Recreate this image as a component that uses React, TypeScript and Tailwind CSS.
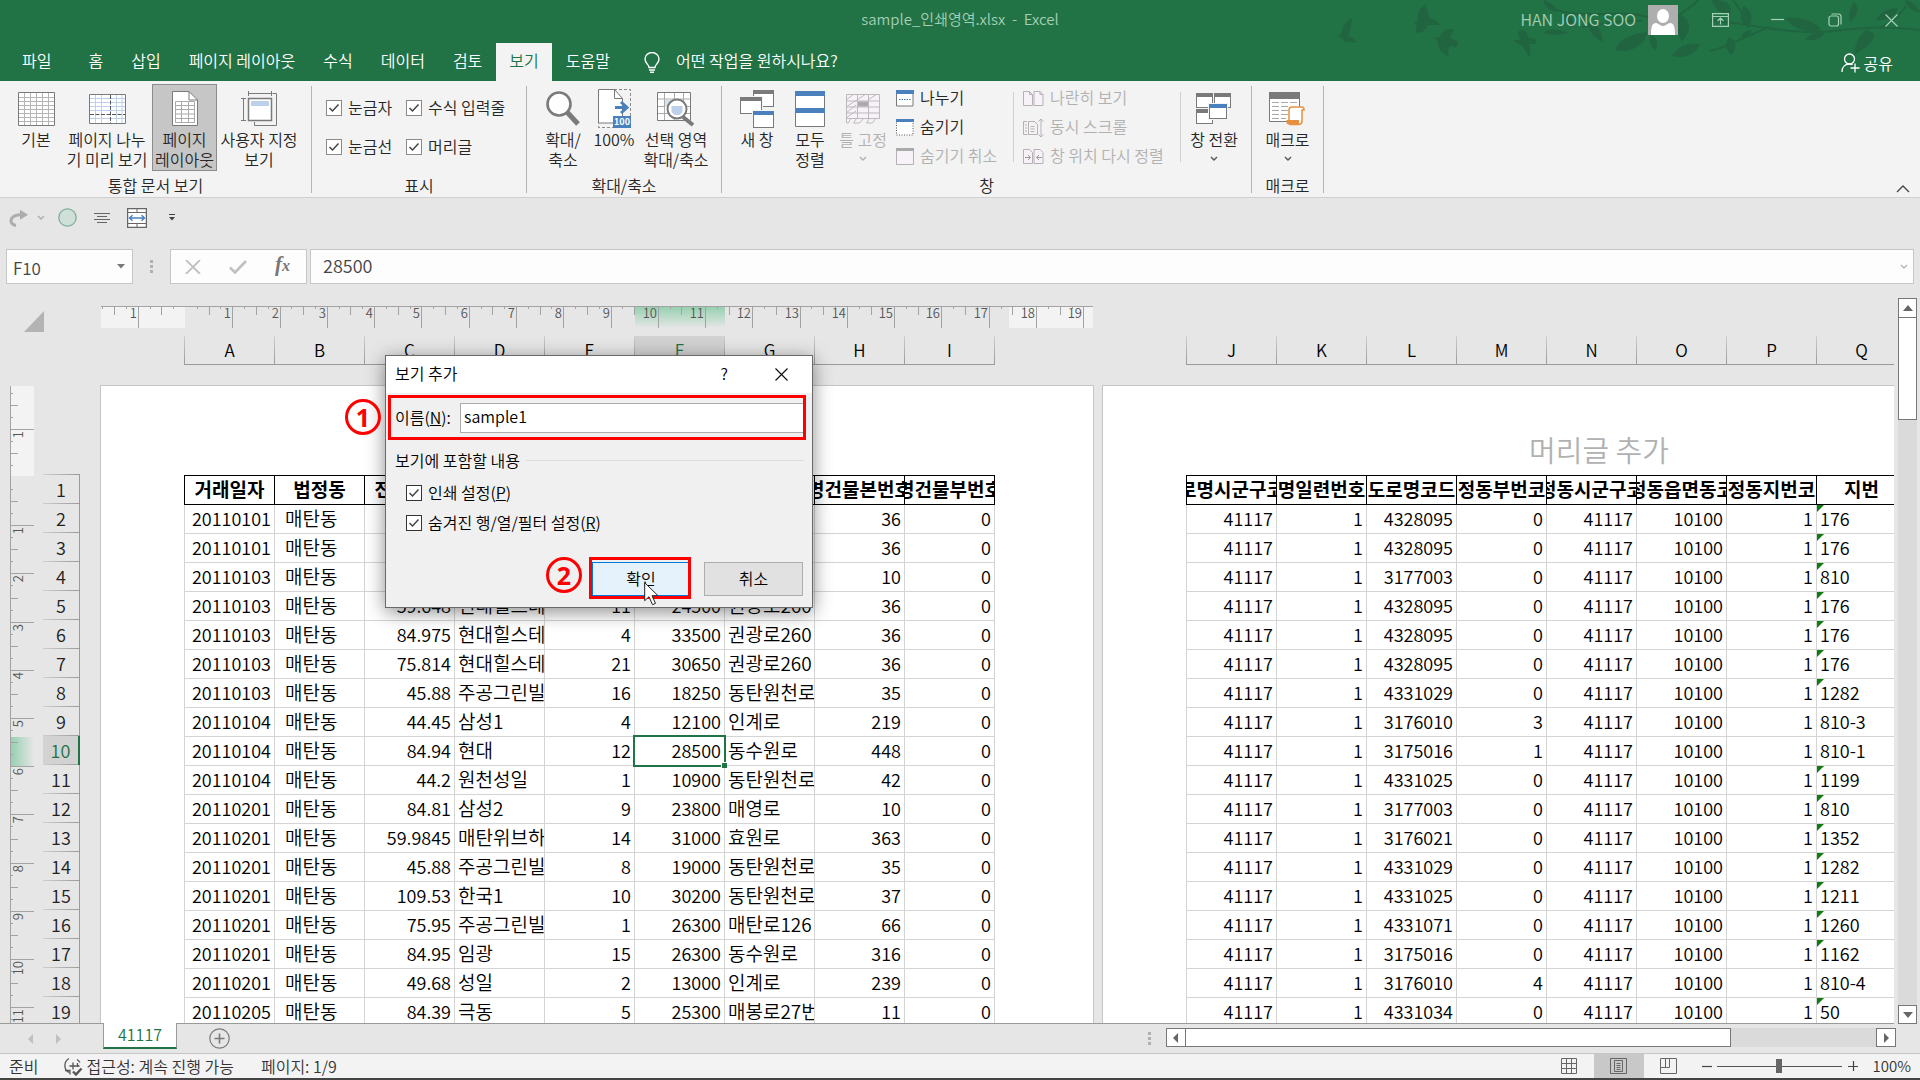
import { useState } from "react";
import type { ReactNode } from "react";

type Row = {
  left: string[];
  right: string[];
};

const leftColumns = ["A", "B", "C", "D", "E", "F", "G", "H", "I"];
const rightColumns = ["J", "K", "L", "M", "N", "O", "P", "Q", "R"];

const leftHeaders = ["거래일자", "법정동", "전용면적", "", "", "", "", "도로명건물본번호코드", "도로명건물부번호코드"];
const rightHeaders = [
  "도로명시군구코드",
  "도로명일련번호코드",
  "도로명코드",
  "법정동부번코드",
  "법정동시군구코드",
  "법정동읍면동코드",
  "법정동지번코드",
  "지번",
  "",
];

const makeRow = (left: string[], road: string, sub: string, lot: string): Row => ({
  left: [left[0], "매탄동", ...left.slice(1), "0"],
  right: ["41117", "1", road, sub, "41117", "10100", "1", lot, ""],
});

const rows: Row[] = [
  makeRow(["20110101", "", "", "", "", "", "36"], "4328095", "0", "176"),
  makeRow(["20110101", "", "", "", "", "", "36"], "4328095", "0", "176"),
  makeRow(["20110103", "", "", "", "", "", "10"], "3177003", "0", "810"),
  makeRow(["20110103", "59.648", "현대힐스테이트", "11", "24500", "권광로260", "36"], "4328095", "0", "176"),
  makeRow(["20110103", "84.975", "현대힐스테이트", "4", "33500", "권광로260", "36"], "4328095", "0", "176"),
  makeRow(["20110103", "75.814", "현대힐스테이트", "21", "30650", "권광로260", "36"], "4328095", "0", "176"),
  makeRow(["20110103", "45.88", "주공그린빌", "16", "18250", "동탄원천로", "35"], "4331029", "0", "1282"),
  makeRow(["20110104", "44.45", "삼성1", "4", "12100", "인계로", "219"], "3176010", "3", "810-3"),
  makeRow(["20110104", "84.94", "현대", "12", "28500", "동수원로", "448"], "3175016", "1", "810-1"),
  makeRow(["20110104", "44.2", "원천성일", "1", "10900", "동탄원천로", "42"], "4331025", "0", "1199"),
  makeRow(["20110201", "84.81", "삼성2", "9", "23800", "매영로", "10"], "3177003", "0", "810"),
  makeRow(["20110201", "59.9845", "매탄위브하늘채", "14", "31000", "효원로", "363"], "3176021", "0", "1352"),
  makeRow(["20110201", "45.88", "주공그린빌", "8", "19000", "동탄원천로", "35"], "4331029", "0", "1282"),
  makeRow(["20110201", "109.53", "한국1", "10", "30200", "동탄원천로", "37"], "4331025", "0", "1211"),
  makeRow(["20110201", "75.95", "주공그린빌", "1", "26300", "매탄로126", "66"], "4331071", "0", "1260"),
  makeRow(["20110201", "84.95", "임광", "15", "26300", "동수원로", "316"], "3175016", "0", "1162"),
  makeRow(["20110201", "49.68", "성일", "2", "13000", "인계로", "239"], "3176010", "4", "810-4"),
  makeRow(["20110205", "84.39", "극동", "5", "25300", "매봉로27번길", "11"], "4331034", "0", "50"),
];

const tabs = ["파일", "홈", "삽입", "페이지 레이아웃", "수식", "데이터", "검토", "보기", "도움말"];

function Chevron({ className = "text-[#555]" }: { className?: string }) {
  return (
    <svg width="8" height="6" viewBox="0 0 8 6" className={className} fill="none" stroke="currentColor" strokeWidth="1.4">
      <path d="M1 1l3 3 3-3" />
    </svg>
  );
}

/* Title bar */

function TitleArt() {
  return (
    <svg
      width="600"
      height="81"
      viewBox="0 0 600 81"
      className="pointer-events-none absolute right-0 top-0"
      fill="#216440"
      stroke="none"
    >
      <path d="M32 18c-7 3-10 10-10 15l-5 3 5 2c2 3 4 5 7 4l8 1-4-5-5-2c3-6 3-12 4-18z" />
      <path d="M105 4c-7 6-8 12-7 17l-4 2 3 2c-2 4-2 7 1 8 5-1 9-4 10-8l12 0-3-4-7-3c-2-4-3-9-5-14z" />
      <path d="M135 30c-8-3-13 1-15 7l-6 1 4 4c-1 6 4 12 12 15-4-6-1-9 0-11 4 1 7 1 8-1l-1-5c-4 0-6-2-7-3 1-3 3-5 5-7z" />
      <path d="M200 30c-3 2-2 6 1 9l-8 2 6 3c4 1 7 8 10 13 2-4 2-9 0-13l8 0-2-5c-4-1-6 0-7-2 0-4-3-7-8-7z" />
      <g fill="none" stroke="#216440" strokeWidth="2">
        <path d="M224 0c4 10 26 16 60 14 30-2 48 2 60 10M262 27c20-2 38-8 60-6M378 0c-6 8-14 10-20 16" />
        <path d="M600 30c-40-6-70 0-100 2-30 2-70-8-110-12M450 27c-20 6-40 20-60 24M560 28c14-6 20-14 26-22M425 24c-2-10-6-16-12-24" />
      </g>
      <path d="M224 2c8-1 12 5 13 10-8-1-11-5-13-10zM243 14c8 0 11 5 10 13-8-3-10-8-10-13zM224 33c6-5 17-4 24 0-7 2-18 3-24 0zM268 23c10 0 14 8 15 19-9-4-14-10-15-19zM295 50c6-12 16-16 32-18-1 12-15 22-32 18zM330 34c8 3 8 10 6 17-6-5-7-11-6-17zM358 14c14 4 14 16 4 28-5-9-7-18-4-28z" />
      <path d="M392 0c14-1 22 6 18 14-10 0-16-6-18-14zM424 6c8 4 10 14 4 22-8-5-9-14-4-22zM352 56c8-11 14-13 28-12-4 10-14 15-28 12zM410 37c8 6 6 12 1 18-6-6-7-12-1-18zM422 38c0-6 4-8 10-8-2 5-5 8-10 8zM465 18c16-1 30 3 36 12-14 3-26 0-36-12zM485 40c4-6 12-8 20-8-4 8-12 9-20 8zM546 30c16 4 6 14-12 25 1-10 4-18 12-25zM530 22c-2-8 0-14 4-20 6 7 4 14-4 20zM556 20c4-8 12-12 22-12-2 8-10 13-22 12zM585 0c8 2 12 6 15 12-8 0-13-4-15-12z" />
    </svg>
  );
}

function TitleBar() {
  return (
    <div className="relative flex h-10 items-center justify-end text-[#a6cfb6]">
      <h1 className="absolute inset-x-0 top-[9px] text-center text-[15px] leading-5">
        sample_인쇄영역.xlsx&nbsp; -&nbsp; Excel
      </h1>
      <span className="mr-3 pb-[2px] text-base">HAN JONG SOO</span>
      <svg width="30" height="30" viewBox="0 0 30 30" className="mr-[34px]">
        <rect width="30" height="30" fill="#aeaeae" />
        <ellipse cx="15" cy="11" rx="6" ry="7" fill="#fff" />
        <path d="M3 30c0-8 1-12 5-12 2 0 4 3 7 3s5-3 7-3c4 0 5 4 5 12z" fill="#fff" />
      </svg>
      <button aria-label="리본 메뉴 표시 옵션" className="mr-[42px]">
        <svg width="17" height="14" viewBox="0 0 17 14" fill="none" stroke="currentColor" strokeWidth="1.2">
          <path d="M.6.6h15.800v12.800h-15.800zM.6 3.500h15.800M8.500 11.500v-6M5.500 8l3-3 3 3" />
        </svg>
      </button>
      <button aria-label="최소화" className="mr-[44px]">
        <svg width="13" height="14" viewBox="0 0 13 14" stroke="currentColor" strokeWidth="1.2">
          <path d="M0 6.500h13" />
        </svg>
      </button>
      <button aria-label="이전 크기로 복원" className="mr-[43px]">
        <svg width="14" height="14" viewBox="0 0 14 14" fill="none" stroke="currentColor" strokeWidth="1.2">
          <rect x="1" y="3" width="9.500" height="10" rx="2" />
          <path d="M3.500 1h7a2.500 2.500 0 012.500 2.500v8" />
        </svg>
      </button>
      <button aria-label="닫기" className="mr-[22px]">
        <svg width="13" height="13" viewBox="0 0 13 13" stroke="currentColor" strokeWidth="1.200">
          <path d="M.5.5l12 12M12.500.5l-12 12" />
        </svg>
      </button>
    </div>
  );
}

function TabBar() {
  return (
    <nav className="relative flex h-[41px] items-stretch pt-[3px] text-base leading-5 text-white">
      {tabs.map((tab) => (
        <button
          key={tab}
          className={
            tab === "보기"
              ? "bg-[#f3f3f3] px-[13px] pb-1 text-[#217346]"
              : tab === "파일"
                ? "pr-[23px] pb-1 pl-[22px]"
                : "px-[14px] pb-1"
          }
        >
          {tab}
        </button>
      ))}
      <button className="ml-5 flex items-center gap-4 pb-1">
        <svg width="16" height="21" viewBox="0 0 16 21" fill="none" stroke="#fff" strokeWidth="1.4" className="mt-1">
          <path d="M5 15.500c0-3-4-4-4-8.500a7 6.500 0 0114 0c0 4.500-4 5.500-4 8.500zM5 18h6M6 20.300h4" />
        </svg>
        어떤 작업을 원하시나요?
      </button>
      <button className="ml-auto mr-[27px] flex items-center gap-1 pt-[2px]">
        <svg width="19" height="20" viewBox="0 0 19 20" fill="none" stroke="#fff" strokeWidth="1.300">
          <circle cx="8.500" cy="6" r="5" />
          <path d="M1 19c0-5 3-8 7.500-8 1.500 0 2.500.3 3 .8M14 10.500v9M9.500 15h9" />
        </svg>
        <span>공유</span>
      </button>
    </nav>
  );
}

/* Ribbon icons */

const NormalIcon = () => (
  <svg width="37" height="34" viewBox="0 0 37 34">
    <path d="M.5.5h36v33h-36z" fill="#fff" />
    <path d="M6.500 1v32M12.500 1v32M18.500 1v32M24.500 1v32M30.500 1v32M1 5.500h35M1 9.500h35M1 13.500h35M1 17.500h35M1 21.500h35M1 25.500h35M1 29.500h35" stroke="#b5b5b5" />
    <path d="M.5.5h36v33h-36z" fill="none" stroke="#7a7a7a" />
  </svg>
);

const PageBreakIcon = () => (
  <svg width="37" height="30" viewBox="0 0 37 30">
    <path d="M.5.5h36v29h-36z" fill="#fff" />
    <path d="M6.500 1v28M12.500 1v28M27.500 1v28M33 1v28M1 4.500h35M1 8.500h35M1 12.500h35M1 16.500h35M1 24.500h35" stroke="#bcd0ea" />
    <path d="M21.500 1v28M1 20.500h35" stroke="#555" strokeDasharray="4 1.500" fill="none" />
    <path d="M.5.5h36v29h-36z" fill="none" stroke="#7a7a7a" />
  </svg>
);

const PageLayoutIcon = () => (
  <svg width="26" height="35" viewBox="0 0 26 35" fill="#fff" stroke="#7a7a7a">
    <path d="M.5.500h16.500l8.500 8.500v25.500h-25z" />
    <path d="M17 .5v8.500h8.500" fill="none" />
    <path d="M3.500 10.500h19v21h-19zM3.500 14.500h19M3.500 18.500h19M3.500 23h19M3.500 27.500h19M9.500 10.500v21M16.500 10.500v21" stroke="#aaa" />
  </svg>
);

const CustomViewIcon = () => (
  <svg width="37" height="36" viewBox="0 0 37 36" fill="none" stroke="#7a7a7a">
    <path d="M31.500 2.500h4v32h-22v-3.500" />
    <path d="M7.500 7.500h23v22h-23z" fill="#fff" strokeWidth="1.500" />
    <path d="M10 10h18v5h-18z" fill="#bcd0ea" stroke="none" />
    <path d="M7.500 0v5M30.500 0v5M7.500 2.500h23M0 7.500h5M0 29.500h5M2.500 7.500v22" />
  </svg>
);

const MagnifierIcon = () => (
  <svg width="34" height="35" viewBox="0 0 34 35">
    <path d="M21 21l11 12" stroke="#7a7a7a" strokeWidth="5" />
    <circle cx="13" cy="13" r="11.500" fill="#fff" stroke="#7a7a7a" strokeWidth="2.600" />
  </svg>
);

const Zoom100Icon = () => (
  <svg width="33" height="40" viewBox="0 0 33 40">
    <path d="M16 .5h16.500v38h-32v-4" fill="none" stroke="#8a8a8a" strokeDasharray="3 2" />
    <path d="M.5.5h16l8 9v24.500h-24z" fill="#fff" stroke="#7a7a7a" />
    <path d="M16.500.5v9h8" fill="none" stroke="#7a7a7a" />
    <path d="M17 18.500h11M23 13l6 5.500-6 5.500" fill="none" stroke="#4a81bd" strokeWidth="3" />
    <path d="M15 27h18v12h-18z" fill="#4a81bd" />
    <text x="24" y="36" fontSize="9" fontWeight="700" textAnchor="middle" fill="#fff">
      100
    </text>
  </svg>
);

const ZoomSelectionIcon = () => (
  <svg width="38" height="36" viewBox="0 0 38 36">
    <path d="M.5 1.500h33v28h-33z" fill="#fff" stroke="#7a7a7a" />
    <path d="M7.500 2v27M17.500 2v27M26.500 2v27M1 8h32M1 15.500h32M1 22.500h32" stroke="#aaa" />
    <path d="M8 9h10v7h-10z" fill="#d5e1f1" />
    <path d="M26 26l10 8" stroke="#7a7a7a" strokeWidth="4" />
    <circle cx="20" cy="18" r="9.500" fill="#fff" stroke="#7a7a7a" strokeWidth="2" />
    <path d="M14.500 15h11v6l-3 3h-5l-3-3z" fill="#bcd0ea" />
  </svg>
);

function WindowShape({ x, y, w, h, accent }: { x: number; y: number; w: number; h: number; accent: string }) {
  return (
    <g>
      <rect x={x - 1} y={y - 1} width={w + 2} height={h + 2} fill="#f3f3f3" />
      <rect x={x + 0.5} y={y + 0.5} width={w - 1} height={h - 1} fill="#fff" stroke="#7a7a7a" />
      <rect x={x} y={y} width={w} height="4" fill={accent} />
    </g>
  );
}

const NewWindowIcon = () => (
  <svg width="35" height="38" viewBox="0 0 35 38">
    <WindowShape x={13} y={0} w={21} h={17} accent="#7a7a7a" />
    <WindowShape x={0} y={7} w={22} h={17} accent="#7a7a7a" />
    <WindowShape x={13} y={21} w={21} h={17} accent="#4a81bd" />
  </svg>
);

const ArrangeIcon = () => (
  <svg width="30" height="36" viewBox="0 0 30 36">
    <path d="M.5.5h29v35h-29z" fill="#fff" stroke="#7a7a7a" />
    <path d="M0 0h30v5h-30zM0 17h30v5h-30z" fill="#4a81bd" />
  </svg>
);

const FreezeIcon = () => (
  <svg width="35" height="30" viewBox="0 0 35 30" fill="#f7f2f7" stroke="#bdb9bd">
    <path d="M.5.500h33v24l-4 0-3 4.500h-6l3-4.500h-6l-4 4.500h-6l3-4.500h-6l-2 4.500h-2z" />
    <path d="M11.500.5v24M22.500.5v24M.5 7h33M.5 13h33M.5 19h33M.500 24.500h33M0 6l8-6M0 13l20-13M0 19l10-8M22 6l9-6M0 24l10-7" fill="none" />
    <path d="M12 7.500h10v5h-10z" fill="#aaa" stroke="none" />
  </svg>
);

const SwitchWindowIcon = () => (
  <svg width="36" height="31" viewBox="0 0 36 31">
    <WindowShape x={0} y={0} w={17} h={15} accent="#7a7a7a" />
    <WindowShape x={18} y={0} w={17} h={15} accent="#7a7a7a" />
    <WindowShape x={0} y={16} w={17} h={15} accent="#7a7a7a" />
    <WindowShape x={13} y={11} w={18} h={15} accent="#4a81bd" />
  </svg>
);

const MacroIcon = () => (
  <svg width="37" height="34" viewBox="0 0 37 34">
    <path d="M.5.500h30v29h-30z" fill="#fff" stroke="#7a7a7a" />
    <path d="M0 0h31v7h-31z" fill="#7a7a7a" />
    <path d="M3 10.500h7M12 10.500h7M21 10.500h7M3 14.500h7M12 14.500h7M3 18.500h7M12 18.500h7M3 22.500h7M12 22.500h7M3 26.500h7M12 26.500h5" stroke="#aaa" />
    <path d="M20 30v-12q0-3 3-3h10q2 0 2 3h-2v11q0 3-3 3.500h-9z" fill="#fff" stroke="#e8903f" strokeWidth="1.500" />
    <path d="M17.500 28h12.500v4.500h-10.500q-2.500-.5-2-4.500z" fill="#e8903f" />
  </svg>
);

const SplitIcon = () => (
  <svg width="18" height="17" viewBox="0 0 18 17">
    <path d="M.5.5h16.500v15.500h-16.500z" fill="#fff" stroke="#7a7a7a" />
    <path d="M0 0h18v4h-18z" fill="#4a81bd" />
    <path d="M3 9.500h12" stroke="#4a81bd" strokeDasharray="1.500 1" />
  </svg>
);

const HideIcon = () => (
  <svg width="18" height="17" viewBox="0 0 18 17">
    <path d="M.5.5h16.500v15.500h-16.500z" fill="#fff" stroke="#555" strokeDasharray="1 1.500" />
    <path d="M0 0h18v3h-18z" fill="#4a81bd" />
  </svg>
);

const UnhideIcon = () => (
  <svg width="18" height="17" viewBox="0 0 18 17">
    <path d="M.5.5h17v16h-17z" fill="#f7f2f7" stroke="#b5b1b5" />
    <path d="M0 0h18v3h-18z" fill="#aaa" />
  </svg>
);

const SideBySideIcon = () => (
  <svg width="21" height="15" viewBox="0 0 21 15" fill="#f7f2f7" stroke="#b5b1b5">
    <path d="M.5.500h6l3 3v11h-9zM11 .500h6l3 3v11h-9zM6.500.500v3h3M17 .5v3h3" />
  </svg>
);

const SyncScrollIcon = () => (
  <svg width="21" height="20" viewBox="0 0 21 20" fill="none" stroke="#b5b1b5">
    <path d="M4 3.500h-3.500v13h4M5.500 3.500h6l3 3v10h-9zM7.500 8.500h4M7.500 11h4M7.500 13.500h4M2 7h2M2 10h2M2 13h2M18 1v18M15.500 3.500l2.500-2.500 2.500 2.500M15.500 16.500l2.500 2.500 2.500-2.500" />
  </svg>
);

const ResetPositionIcon = () => (
  <svg width="21" height="15" viewBox="0 0 21 15" fill="#f7f2f7" stroke="#b5b1b5">
    <path d="M.5.500h6l3 3v11h-9zM11 .500h6l3 3v11h-9z" />
    <path d="M2 8.500h5M5 6l2.500 2.500-2.500 2.500M19 8.500h-5M16 6l-2.500 2.500 2.500 2.500" fill="none" stroke="#999" />
  </svg>
);

/* Ribbon */

function RibbonButton({
  icon,
  lines,
  className,
  menu = false,
  disabled = false,
}: {
  icon: ReactNode;
  lines: string[];
  className: string;
  menu?: boolean;
  disabled?: boolean;
}) {
  return (
    <button
      className={`flex h-[87px] flex-col items-center whitespace-nowrap leading-5 ${disabled ? "text-[#b1b1b1]" : ""} ${className}`}
    >
      <span className="mt-1 grid h-[41px] place-items-center">{icon}</span>
      {lines.map((line) => (
        <span key={line}>{line}</span>
      ))}
      {menu && (
        <span className="mt-[7px]">
          <Chevron className={disabled ? "text-[#b1b1b1]" : "text-[#555]"} />
        </span>
      )}
    </button>
  );
}

function SmallButton({ icon, label, disabled = false }: { icon: ReactNode; label: string; disabled?: boolean }) {
  return (
    <button className={`flex h-[29px] items-center gap-[6px] whitespace-nowrap leading-5 ${disabled ? "text-[#b1b1b1]" : ""}`}>
      {icon}
      <span className="pb-[3px]">{label}</span>
    </button>
  );
}

function RibbonGroup({ label, className, children }: { label: string; className: string; children: ReactNode }) {
  return (
    <section className={`mb-1 flex h-[107px] shrink-0 flex-col justify-between border-r border-[#b5b5b5] ${className}`}>
      <div className="-mt-[2px] flex">{children}</div>
      <h2 className="text-center leading-4">{label}</h2>
    </section>
  );
}

function CheckBox({ children, className = "", border = "border-[#8a8a8a]" }: { children: ReactNode; className?: string; border?: string }) {
  return (
    <label className={`flex items-center gap-[6px] whitespace-nowrap leading-5 ${className}`}>
      <span className="grid">
        <input
          type="checkbox"
          defaultChecked
          className={`peer col-start-1 row-start-1 size-4 appearance-none border bg-white ${border}`}
        />
        <svg
          viewBox="0 0 16 16"
          className="pointer-events-none invisible col-start-1 row-start-1 size-4 peer-checked:visible"
          fill="none"
          stroke="#444"
          strokeWidth="1.500"
        >
          <path d="M3.500 8l3 3 6-6.500" />
        </svg>
      </span>
      <span className="pb-[2px]">{children}</span>
    </label>
  );
}

function Ribbon() {
  return (
    <div className="relative flex h-[117px] border-b border-[#d0d0d0] bg-[#f3f3f3] pt-[5px] text-base text-[#262626]">
      <RibbonGroup label="통합 문서 보기" className="w-[312px]">
        <RibbonButton icon={<NormalIcon />} lines={["기본"]} className="ml-[6px] w-[60px]" />
        <RibbonButton icon={<PageBreakIcon />} lines={["페이지 나누", "기 미리 보기"]} className="w-[82px]" />
        <RibbonButton
          icon={<PageLayoutIcon />}
          lines={["페이지", "레이아웃"]}
          className="ml-1 w-[65px] bg-[#c6c6c6] outline outline-1 -outline-offset-1 outline-[#8c8c8c]"
        />
        <RibbonButton icon={<CustomViewIcon />} lines={["사용자 지정", "보기"]} className="w-[84px]" />
      </RibbonGroup>

      <RibbonGroup label="표시" className="w-[215px]">
        <div className="ml-[14px] grid grid-cols-[80px_auto] pt-1">
          <CheckBox className="h-[39px]">눈금자</CheckBox>
          <CheckBox className="h-[39px]">수식 입력줄</CheckBox>
          <CheckBox className="h-[39px]">눈금선</CheckBox>
          <CheckBox className="h-[39px]">머리글</CheckBox>
        </div>
      </RibbonGroup>

      <RibbonGroup label="확대/축소" className="w-[195px]">
        <RibbonButton icon={<MagnifierIcon />} lines={["확대/", "축소"]} className="ml-[10px] w-[52px]" />
        <RibbonButton icon={<Zoom100Icon />} lines={["100%"]} className="w-[50px]" />
        <RibbonButton icon={<ZoomSelectionIcon />} lines={["선택 영역", "확대/축소"]} className="w-[74px]" />
      </RibbonGroup>

      <RibbonGroup label="창" className="w-[530px]">
        <RibbonButton icon={<NewWindowIcon />} lines={["새 창"]} className="ml-[6px] w-[58px]" />
        <RibbonButton icon={<ArrangeIcon />} lines={["모두", "정렬"]} className="w-[48px]" />
        <RibbonButton icon={<FreezeIcon />} lines={["틀 고정"]} menu disabled className="w-[58px]" />
        <div className="ml-1 w-[117px]">
          <SmallButton icon={<SplitIcon />} label="나누기" />
          <SmallButton icon={<HideIcon />} label="숨기기" />
          <SmallButton icon={<UnhideIcon />} label="숨기기 취소" disabled />
        </div>
        <div className="mt-2 h-[70px] w-px bg-[#d0d0d0]" />
        <div className="ml-[9px] w-[157px]">
          <SmallButton icon={<SideBySideIcon />} label="나란히 보기" disabled />
          <SmallButton icon={<SyncScrollIcon />} label="동시 스크롤" disabled />
          <SmallButton icon={<ResetPositionIcon />} label="창 위치 다시 정렬" disabled />
        </div>
        <div className="mt-2 h-[70px] w-px bg-[#d0d0d0]" />
        <RibbonButton icon={<SwitchWindowIcon />} lines={["창 전환"]} menu className="w-[66px]" />
      </RibbonGroup>

      <RibbonGroup label="매크로" className="w-[72px]">
        <RibbonButton icon={<MacroIcon />} lines={["매크로"]} menu className="w-full" />
      </RibbonGroup>

      <button aria-label="리본 메뉴 축소" className="ml-auto mr-[10px] mb-[4px] self-end">
        <svg width="14" height="8" viewBox="0 0 14 8" fill="none" stroke="#444" strokeWidth="1.300">
          <path d="M1 7l6-6 6 6" />
        </svg>
      </button>
    </div>
  );
}

function QuickAccess() {
  return (
    <div className="flex h-[39px] shrink-0 items-center pl-[9px]">
      <button aria-label="다시 실행" className="flex items-center gap-[8px]">
        <svg width="20" height="18" viewBox="0 0 20 18" fill="none" stroke="#adadad" strokeWidth="3">
          <path d="M7 16.500c-5-1-6-5-4-7.500 2-3 7-3.500 12-3.500" />
          <path d="M11 .8l8 5-8 5z" fill="#adadad" stroke="none" />
        </svg>
        <Chevron className="text-[#adadad]" />
      </button>
      <button aria-label="타원" className="ml-[13px]">
        <svg width="19" height="19" viewBox="0 0 19 19">
          <circle cx="9.500" cy="9.500" r="8.700" fill="#cfe0d8" stroke="#7fae98" strokeWidth="1.300" />
        </svg>
      </button>
      <button aria-label="가운데 맞춤" className="ml-[17px]">
        <svg width="16" height="12" viewBox="0 0 16 12" stroke="#666" strokeWidth="1">
          <path d="M0 1.500h16M3 4.500h10M0 7.500h16M3 10.500h10" />
        </svg>
      </button>
      <button aria-label="병합하고 가운데 맞춤" className="ml-[17px]">
        <svg width="20" height="20" viewBox="0 0 20 20">
          <path d="M.6.6h18.800v18.800h-18.800z" fill="#fff" stroke="#666" strokeWidth="1.300" />
          <path d="M0 4.500h20M0 15.500h20M10 0v4.500M10 15.500v4.500" stroke="#666" />
          <path d="M2.500 10h15M5.500 7.200L2.500 10l3 2.800M14.500 7.200l3 2.800-3 2.800" stroke="#4a81bd" strokeWidth="1.500" fill="none" />
        </svg>
      </button>
      <button aria-label="빠른 실행 도구 모음 사용자 지정" className="ml-[22px]">
        <svg width="6" height="7" viewBox="0 0 6 7" fill="#444">
          <path d="M0 0h6v1h-6zM0 3h6l-3 3.500z" />
        </svg>
      </button>
    </div>
  );
}

function Dots() {
  return (
    <svg width="4" height="14" viewBox="0 0 4 14" fill="#b0b0b0">
      <path d="M0 0h3v3h-3zM0 5h3v3h-3zM0 10h3v3h-3z" />
    </svg>
  );
}

function FormulaBar() {
  return (
    <div className="mt-3 flex h-[35px] shrink-0 items-stretch pl-[6px] pr-[6px] text-[17px] text-[#444]">
      <div className="flex w-[127px] items-center border border-[#c6c6c6] bg-[#fdfdfd]">
        <input aria-label="이름 상자" defaultValue="F10" className="w-full min-w-0 flex-1 bg-transparent pl-[6px] pt-[2px] outline-none" />
        <button aria-label="이름 목록" className="mr-[7px]">
          <svg width="8" height="5" viewBox="0 0 8 5" fill="#777">
            <path d="M0 0h8l-4 4.500z" />
          </svg>
        </button>
      </div>
      <div className="flex w-[37px] items-center justify-center">
        <Dots />
      </div>
      <div className="flex w-[137px] items-center border border-[#c6c6c6] bg-[#fdfdfd]">
        <button aria-label="취소" className="ml-[14px]">
          <svg width="16" height="14" viewBox="0 0 16 14" stroke="#c0c0c0" strokeWidth="1.800">
            <path d="M1 0l14 14M15 0L1 14" />
          </svg>
        </button>
        <button aria-label="입력" className="ml-[28px]">
          <svg width="18" height="14" viewBox="0 0 18 14" fill="none" stroke="#c0c0c0" strokeWidth="2.600">
            <path d="M1 7.500l5 5L17 1" />
          </svg>
        </button>
        <button aria-label="함수 삽입" className="ml-[28px] pb-[2px] font-['Liberation_Serif',serif] text-[21px] leading-5 font-bold text-[#777] italic">
          f<span className="text-base">x</span>
        </button>
      </div>
      <div className="ml-[3px] flex flex-1 items-center border border-[#c6c6c6] bg-[#fdfdfd]">
        <input aria-label="수식 입력줄" defaultValue="28500" className="min-w-0 flex-1 bg-transparent pb-[2px] pl-3 text-[18px] outline-none" />
        <span className="mr-[5px]">
          <Chevron className="text-[#b5b5b5]" />
        </span>
      </div>
    </div>
  );
}

/* Rulers */

const HCM = 47.28;
const VCM = 48.2;

function HorizontalRuler() {
  const quarters = Array.from({ length: 84 }, (_, i) => i - 7);
  return (
    <svg width="993" height="22" className="block">
      <defs>
        <linearGradient id="selectedColumn" x1="0" y1="0" x2="0" y2="1">
          <stop offset="0" stopColor="#93cfae" />
          <stop offset="1" stopColor="#e6e6e6" />
        </linearGradient>
      </defs>
      <rect x="1" width="84" height="22" fill="#f3f3f3" />
      <rect x="909" width="84" height="22" fill="#f3f3f3" />
      <rect x="535" width="90" height="22" fill="url(#selectedColumn)" />
      <rect x="1" width="992" height="1" fill="#a3a3a3" />
      {quarters.map((q) => {
        const x = Math.round(85 + (q * HCM) / 4);
        if (q === 0 || x >= 992) return null;
        const whole = q % 4 === 0;
        const height = whole ? 21 : q % 2 === 0 ? 8 : 2;
        return (
          <g key={q}>
            <rect x={x} y="1" width="1" height={height} fill="#a3a3a3" />
            {whole && (
              <text x={x - 1} y="12" fontSize="13" textAnchor="end" fill="#555">
                {Math.abs(q / 4)}
              </text>
            )}
          </g>
        );
      })}
    </svg>
  );
}

function VerticalRuler() {
  const quarters = Array.from({ length: 53 }, (_, i) => i - 7);
  return (
    <svg width="24" height="640" className="block shrink-0">
      <defs>
        <linearGradient id="selectedRow">
          <stop offset="0" stopColor="#93cfae" />
          <stop offset="1" stopColor="#e6e6e6" />
        </linearGradient>
      </defs>
      <rect y="1" width="24" height="90" fill="#f3f3f3" />
      <rect y="352" width="24" height="29" fill="url(#selectedRow)" />
      <rect width="1" y="1" height="640" fill="#a3a3a3" />
      {quarters.map((q) => {
        const y = Math.round(92 + (q * VCM) / 4);
        if (q === 0) return null;
        const whole = q % 4 === 0;
        const width = whole ? 23 : q % 2 === 0 ? 7 : 2;
        return (
          <g key={q}>
            <rect y={y} x="1" height="1" width={width} fill="#a3a3a3" />
            {whole && (
              <text transform={`translate(13 ${y + 2}) rotate(-90)`} fontSize="13" textAnchor="end" fill="#555">
                {Math.abs(q / 4)}
              </text>
            )}
          </g>
        );
      })}
    </svg>
  );
}

/* Sheet */

function ColumnHeads({ columns, selected }: { columns: string[]; selected?: string }) {
  return (
    <div className="ml-[84px] flex h-[29px] w-[811px] border-b border-[#9a9a9a] text-[17px] leading-[27px] text-black">
      <div className="w-px bg-linear-to-b from-[#cfcfcf] to-[#9a9a9a]" />
      {columns.map((column) => (
        <div key={column} className={`flex w-[90px] ${column === selected ? "bg-[#d2d2d2] text-[#217346]" : ""}`}>
          <span className="flex-1 text-center">{column}</span>
          <span className="w-px bg-linear-to-b from-[#cfcfcf] to-[#9a9a9a]" />
        </div>
      ))}
    </div>
  );
}

function Cell({ value, column, selected }: { value: string; column: string; selected: boolean }) {
  const hangul = column === "B" || column === "D" || column === "G";
  const textual = hangul || column === "Q";
  const edge = column === "A" || column === "J" ? "border-l" : "";
  return (
    <td className={`relative h-[29px] border-r border-b border-[#d4d4d4] p-0 ${edge}`}>
      <div
        className={`h-7 overflow-hidden whitespace-nowrap ${hangul ? "text-[19px] leading-[25px]" : "text-[18px] leading-[27px]"} ${
          column === "B" ? "pl-[10px]" : textual ? "pl-[3px]" : "pr-[3px] text-right"
        }`}
      >
        {value}
      </div>
      {column === "Q" && !value.includes("-") && (
        <svg width="7" height="7" className="absolute top-0 left-0">
          <path d="M0 0h7l-7 7z" fill="#107c10" />
        </svg>
      )}
      {selected && (
        <div className="absolute -top-[2px] -right-[2px] -bottom-[2px] -left-[2px] z-10 border-2 border-[#217346]">
          <span className="absolute -right-[3px] -bottom-[3px] size-[6px] border-t border-l border-white bg-[#217346]" />
        </div>
      )}
    </td>
  );
}

function SheetTable({ columns, headers, side }: { columns: string[]; headers: string[]; side: "left" | "right" }) {
  return (
    <table className="ml-[83px] w-[811px] table-fixed border-separate border-spacing-0 text-black">
      <colgroup>
        {columns.map((column, i) => (
          <col key={column} className={i === 0 ? "w-[91px]" : "w-[90px]"} />
        ))}
      </colgroup>
      <thead>
        <tr>
          {headers.map((header, i) => (
            <th key={columns[i]} className={`h-[30px] border-y border-r border-black p-0 ${i === 0 ? "border-l" : ""}`}>
              <div className="flex h-7 justify-center overflow-hidden whitespace-nowrap text-[19px] leading-[25px] font-bold">
                <span className="shrink-0">{header}</span>
              </div>
            </th>
          ))}
        </tr>
      </thead>
      <tbody>
        {rows.map((row, r) => (
          <tr key={r}>
            {row[side].map((value, i) => (
              <Cell key={columns[i]} value={value} column={columns[i]} selected={columns[i] === "F" && r === 8} />
            ))}
          </tr>
        ))}
      </tbody>
    </table>
  );
}

function PageView({
  columns,
  headers,
  side,
  header,
}: {
  columns: string[];
  headers: string[];
  side: "left" | "right";
  header?: string;
}) {
  return (
    <div className="flex w-[994px] shrink-0 flex-col">
      <div className="h-[22px] shrink-0">{side === "left" && <HorizontalRuler />}</div>
      <div className="mt-2 shrink-0">
        <ColumnHeads columns={columns} selected="F" />
      </div>
      <div className="mt-5 flex-1 border border-b-0 border-[#c6c6c6] bg-white">
        <div className="h-[89px] pt-[43px] text-center text-[29px] leading-10 text-[#b1b1b1]">{header}</div>
        <SheetTable columns={columns} headers={headers} side={side} />
      </div>
    </div>
  );
}

function RowHeads() {
  return (
    <div className="mt-[89px] ml-[9px] w-[37px] border-r border-[#9a9a9a] text-center text-[18px] leading-7 text-[#222]">
      <div className="h-px bg-linear-to-r from-[#cfcfcf] to-[#9a9a9a]" />
      {Array.from({ length: 19 }, (_, i) => i + 1).map((n) => (
        <div key={n} className={n === 10 ? "-mr-px border-r-2 border-[#217346] bg-[#d2d2d2] text-[#217346]" : ""}>
          <div className="h-7">{n}</div>
          <div className="h-px bg-linear-to-r from-[#cfcfcf] to-[#9a9a9a]" />
        </div>
      ))}
    </div>
  );
}

function ScrollArrow({ d, className }: { d: string; className: string }) {
  return (
    <button aria-label="스크롤" className={`grid shrink-0 place-items-center border border-[#777] bg-white ${className}`}>
      <svg width="10" height="10" viewBox="0 0 10 10" fill="#666">
        <path d={d} />
      </svg>
    </button>
  );
}

function Workspace() {
  return (
    <div className="flex min-h-0 flex-1">
      <div className="flex min-w-0 flex-1 overflow-hidden border-b border-[#9a9a9a]">
        <div className="flex w-[100px] shrink-0 flex-col">
          <div className="h-[101px] shrink-0 pt-[27px] pl-6">
            <svg width="20" height="21" viewBox="0 0 20 21" fill="#b3b3b3">
              <path d="M20 0v21h-20z" />
            </svg>
          </div>
          <div className="flex pl-[10px]">
            <VerticalRuler />
            <RowHeads />
          </div>
        </div>
        <div className="flex min-w-0 flex-1 gap-2 pt-[22px]">
          <PageView columns={leftColumns} headers={leftHeaders} side="left" />
          <PageView columns={rightColumns} headers={rightHeaders} side="right" header="머리글 추가" />
        </div>
      </div>
      <div className="flex w-[26px] shrink-0 flex-col pt-[14px] pr-[3px] pl-1">
        <ScrollArrow d="M0 8l5-6 5 6z" className="h-5" />
        <div className="flex-1 bg-[#dadada]">
          <div className="-mt-px h-[103px] border border-[#777] bg-white" />
        </div>
        <ScrollArrow d="M0 2l5 6 5-6z" className="h-[19px]" />
      </div>
    </div>
  );
}

function SheetTabs() {
  return (
    <div className="flex h-[29px] shrink-0">
      <div className="flex w-[103px] items-center gap-[21px] pl-7">
        <svg width="5" height="10" fill="#c0c0c0">
          <path d="M5 0v10l-5-5z" />
        </svg>
        <svg width="5" height="10" fill="#c0c0c0" className="ml-[2px]">
          <path d="M0 0v10l5-5z" />
        </svg>
      </div>
      <button className="-mt-px h-[26px] w-[74px] border-x border-b-2 border-x-[#9a9a9a] border-b-[#217346] bg-white pb-[2px] text-base leading-[22px] text-[#217346]">
        41117
      </button>
      <button aria-label="새 시트" className="ml-8">
        <svg width="21" height="21" viewBox="0 0 21 21" fill="none" stroke="#7a7a7a" strokeWidth="1.200">
          <circle cx="10.500" cy="10.500" r="9.700" />
          <path d="M10.500 5.500v10M5.500 10.500h10" strokeWidth="1.600" />
        </svg>
      </button>
      <div className="ml-auto flex w-[772px] pt-1 pr-[24px] pb-[6px]">
        <span className="mt-1 mr-[14px]">
          <Dots />
        </span>
        <ScrollArrow d="M7 0v10l-5-5z" className="w-5" />
        <div className="-ml-px flex-1 bg-[#dadada]">
          <div className="h-full w-[79%] border border-[#777] bg-white" />
        </div>
        <ScrollArrow d="M3 0v10l5-5z" className="w-5" />
      </div>
    </div>
  );
}

function StatusBar() {
  const [zoom, setZoom] = useState(50);
  return (
    <footer className="flex h-[27px] shrink-0 items-stretch border-t border-b-2 border-t-[#c6c6c6] border-b-[#444] bg-[#f3f3f3] text-base leading-6 text-[#333]">
      <span className="ml-[9px]">준비</span>
      <button className="ml-[26px] flex items-center gap-[3px]">
        <svg width="19" height="19" viewBox="0 0 19 19" fill="none" stroke="#555" strokeWidth="1.300">
          <path d="M5 1.500a8 8 0 000 14M13 2.500a8 8 0 013 3M1 13.500h5v4" />
          <path d="M9 5.500v7M5.500 9h10M13.500 6v4" />
          <path d="M9 14.500l3 3 5.500-6" strokeWidth="2.400" />
        </svg>
        접근성: 계속 진행 가능
      </button>
      <span className="ml-[27px]">페이지: 1/9</span>
      <div className="ml-auto flex items-stretch">
        <button aria-label="기본" className="w-[50px] pl-[17px]">
          <svg width="16" height="16" viewBox="0 0 16 16" fill="none" stroke="#666">
            <path d="M.5.5h15v15h-15zM5.500.500v15M10.500.5v15M.5 5.500h15M.5 10.500h15" />
          </svg>
        </button>
        <button aria-label="페이지 레이아웃" className="w-[50px] bg-[#c8c8c8] pl-4">
          <svg width="17" height="16" viewBox="0 0 17 16" fill="none" stroke="#666">
            <path d="M.5.5h16v15h-16zM4.500 2.500h8v11h-8zM6.500 5.500h4M6.500 7.500h4M6.500 9.500h4M6.500 11.500h4" />
          </svg>
        </button>
        <button aria-label="페이지 나누기 미리 보기" className="w-[50px] pl-4">
          <svg width="17" height="16" viewBox="0 0 17 16" fill="none" stroke="#666">
            <path d="M.5.5h16v15h-16zM.5 9.500h9v-9M5.500.500v9" />
          </svg>
        </button>
        <button aria-label="축소" className="ml-2 grid place-items-center">
          <svg width="10" height="10" stroke="#444">
            <path d="M0 5.500h10" strokeWidth="1.200" />
          </svg>
        </button>
        <div className="ml-[5px] grid w-[125px] items-center">
          <div className="col-start-1 row-start-1 h-px bg-[#555]" />
          <input
            type="range"
            aria-label="확대/축소"
            value={zoom}
            onChange={(e) => setZoom(Number(e.target.value))}
            className="col-start-1 row-start-1 h-4 w-full appearance-none bg-transparent [&::-webkit-slider-thumb]:h-[14px] [&::-webkit-slider-thumb]:w-[6px] [&::-webkit-slider-thumb]:appearance-none [&::-webkit-slider-thumb]:bg-[#666]"
          />
        </div>
        <button aria-label="확대" className="ml-[6px] grid place-items-center">
          <svg width="10" height="10" stroke="#444">
            <path d="M0 5.500h10M5.500 0v10" strokeWidth="1.200" />
          </svg>
        </button>
        <span className="mr-[9px] ml-[15px] text-[15px]">100%</span>
      </div>
    </footer>
  );
}

/* Dialog and callouts */

function CircledNumber({ n, className }: { n: number; className: string }) {
  return (
    <span
      className={`absolute grid size-9 place-items-center rounded-full border-[3px] border-[#fe0000] font-['Open_Sans',sans-serif] text-[25px] leading-none font-bold text-[#fe0000] ${className}`}
    >
      {n}
    </span>
  );
}

function AddViewDialog() {
  const [name, setName] = useState("sample1");
  return (
    <div
      role="dialog"
      aria-labelledby="dialog-title"
      className="absolute top-[355px] left-[385px] z-20 w-[428px] border border-[#6a6a6a] bg-[#f0f0f0] text-base leading-5 text-black shadow-[0_4px_18px_rgba(0,0,0,0.45)]"
    >
      <div className="flex h-[37px] items-center bg-white pl-[9px]">
        <h2 id="dialog-title" className="flex-1 pb-1">
          보기 추가
        </h2>
        <button aria-label="도움말" className="mr-[47px] pb-1">
          ?
        </button>
        <button aria-label="닫기" className="mr-6">
          <svg width="13" height="13" viewBox="0 0 13 13" stroke="#111" strokeWidth="1.200">
            <path d="M.5.5l12 12M12.500.5l-12 12" />
          </svg>
        </button>
      </div>
      <div className="flex items-center pt-[10px] pr-2 pl-[9px]">
        <label htmlFor="view-name" className="w-[65px] pb-[2px]">
          이름(<u>N</u>):
        </label>
        <input
          id="view-name"
          value={name}
          onChange={(e) => setName(e.target.value)}
          className="h-[30px] min-w-0 flex-1 border border-[#ababab] bg-white pb-1 pl-[3px] outline-none"
        />
      </div>
      <fieldset className="mt-[17px] pr-2 pl-[9px]">
        <legend className="flex w-full items-center gap-[6px]">
          보기에 포함할 내용
          <span className="h-px flex-1 bg-[#dcdcdc]" />
        </legend>
        <div className="pt-2 pl-[11px]">
          <CheckBox className="h-[30px]" border="border-[#333]">
            인쇄 설정(<u>P</u>)
          </CheckBox>
          <CheckBox className="h-[30px]" border="border-[#333]">
            숨겨진 행/열/필터 설정(<u>R</u>)
          </CheckBox>
        </div>
      </fieldset>
      <div className="mt-6 flex justify-end gap-[14px] pr-[9px] pb-[11px]">
        <button className="h-[34px] w-[98px] border border-[#0078d7] bg-[#e5f1fb] pb-[2px]">확인</button>
        <button className="h-[34px] w-[99px] border border-[#adadad] bg-[#e1e1e1] pb-[2px]">취소</button>
      </div>

      <div className="pointer-events-none absolute top-[39px] left-[2px] h-[45px] w-[418px] border-[3px] border-[#fe0000]" />
      <div className="pointer-events-none absolute top-[201px] left-[203px] h-[42px] w-[102px] border-[3px] border-[#fe0000]" />
      <CircledNumber n={1} className="top-[43px] -left-[41px]" />
      <CircledNumber n={2} className="top-[201px] left-[160px]" />
      <svg width="15" height="24" viewBox="0 0 15 24" className="absolute top-[226px] left-[258px]" fill="#fff" stroke="#222">
        <path d="M.7.7v18l4.300-4 3.500 8 3-1.300-3.500-7.700h6z" />
      </svg>
    </div>
  );
}

export default function App() {
  return (
    <div className="relative flex h-screen flex-col overflow-hidden bg-[#e6e6e6] font-['Noto_Sans_CJK_KR','Open_Sans',sans-serif] font-[350]">
      <header className="relative shrink-0 bg-[#217346]">
        <TitleArt />
        <TitleBar />
        <TabBar />
        <Ribbon />
      </header>
      <QuickAccess />
      <FormulaBar />
      <Workspace />
      <SheetTabs />
      <StatusBar />
      <AddViewDialog />
    </div>
  );
}
